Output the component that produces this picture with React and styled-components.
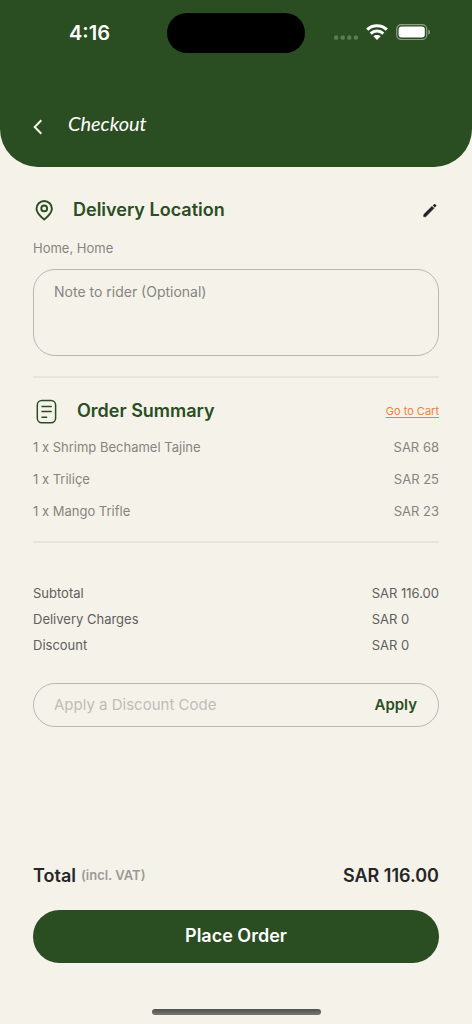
import React from "react";
import styled, { createGlobalStyle } from "styled-components";

const green = "#2a4d21";
const cream = "#f5f2ea";

const GlobalStyle = createGlobalStyle`
  *, *::before, *::after { box-sizing: border-box; }
  body { margin: 0; background: ${cream}; font-family: Inter, sans-serif; color: #262626; }
  button, input, textarea { font-family: inherit; }
  h1, h2, p, ul, dl, dt, dd { margin: 0; padding: 0; }
`;

const Screen = styled.div`
  min-height: 100vh;
  display: flex;
  flex-direction: column;
`;

const Header = styled.header`
  background: ${green};
  color: #fff;
  border-radius: 0 0 38px 38px;
  padding: 13px 0 23px;
`;

const StatusBar = styled.div`
  display: grid;
  grid-template-columns: 1fr 138px 1fr;
  align-items: center;
`;

const Time = styled.time`
  padding-left: 69px;
  font-size: 20px;
  line-height: 24px;
  font-weight: 600;
`;

const Island = styled.div`
  height: 40px;
  border-radius: 20px;
  background: #000;
`;

const Indicators = styled.div`
  display: flex;
  align-items: center;
  justify-content: flex-end;
  gap: 8px;
  padding: 0 41px 2px 0;
`;

const TitleRow = styled.div`
  display: flex;
  align-items: center;
  gap: 20px;
  padding-left: 28px;
  margin-top: 53px;
`;

const BackButton = styled.button`
  display: flex;
  padding: 2px 0 0;
  border: 0;
  background: none;
  color: ${cream};
`;

const Title = styled.h1`
  padding-bottom: 4px;
  font-family: Lato, sans-serif;
  font-size: 20px;
  line-height: 34px;
  font-weight: 400;
  font-style: italic;
`;

const Main = styled.main`
  flex: 1;
  display: flex;
  flex-direction: column;
  padding: 28px 33px 0;
`;

const HeadingRow = styled.div`
  display: flex;
  align-items: center;
  height: 30px;
  gap: 18px;
`;

const Heading = styled.h2`
  flex: 1;
  font-size: 18px;
  line-height: 24px;
  font-weight: 600;
  color: ${green};
`;

const IconButton = styled.button`
  display: flex;
  padding: 0;
  border: 0;
  background: none;
  color: #222;
`;

const Address = styled.p`
  margin-top: 13px;
  font-size: 13px;
  line-height: 20px;
  color: #858580;
`;

const Note = styled.textarea`
  display: block;
  width: 100%;
  height: 87px;
  margin-top: 11px;
  padding: 12px 20px;
  border: 1px solid #b9b8b3;
  border-radius: 22px;
  background: none;
  resize: none;
  font-size: 14px;
  line-height: 20px;
  &::placeholder { color: #858580; opacity: 1; }
`;

const Divider = styled.hr`
  width: 100%;
  height: 2px;
  margin: ${(p) => p.$top}px 0 0;
  border: 0;
  background: #e8e5de;
`;

const OrderSection = styled.section`
  margin-top: 18px;
`;

const CartLink = styled.a`
  font-size: 11px;
  line-height: 16px;
  color: #f0803f;
  text-underline-offset: 2px;
`;

const Items = styled.ul`
  margin-top: 5px;
  list-style: none;
`;

const Item = styled.li`
  display: flex;
  justify-content: space-between;
  font-size: 13px;
  line-height: 32px;
  color: #858580;
`;

const Charges = styled.dl`
  display: grid;
  grid-template-columns: 1fr auto;
  margin-top: 37px;
  font-size: 13px;
  line-height: 26px;
  color: #5f5f5c;
`;

const DiscountForm = styled.form`
  display: flex;
  align-items: center;
  height: 44px;
  margin-top: 25px;
  padding: 0 21px 0 20px;
  border: 1px solid #b9b8b3;
  border-radius: 22px;
`;

const DiscountInput = styled.input`
  flex: 1;
  min-width: 0;
  padding: 0;
  border: 0;
  background: none;
  font-size: 15px;
  line-height: 24px;
  &::placeholder { color: #bfbdb7; opacity: 1; }
`;

const ApplyButton = styled.button`
  padding: 0;
  border: 0;
  background: none;
  font-size: 15px;
  line-height: 24px;
  font-weight: 600;
  color: ${green};
`;

const Footer = styled.footer`
  margin-top: auto;
  padding: 24px 33px 9px;
`;

const TotalRow = styled.div`
  display: flex;
  align-items: center;
  gap: 5px;
  height: 30px;
  font-size: 18px;
  font-weight: 600;
`;

const Vat = styled.span`
  flex: 1;
  font-size: 13px;
  font-weight: 600;
  color: #9b9a96;
`;

const PlaceOrder = styled.button`
  display: block;
  width: 100%;
  height: 53px;
  margin-top: 20px;
  padding: 0 0 2px;
  border: 0;
  border-radius: 27px;
  background: ${green};
  color: #fff;
  font-size: 18px;
  font-weight: 600;
`;

const HomeIndicator = styled.div`
  width: 169px;
  height: 6px;
  margin: 46px auto 0;
  border-radius: 3px;
  background: linear-gradient(#50514d, #777772);
`;

const items = [
  ["1 x Shrimp Bechamel Tajine", "SAR 68"],
  ["1 x Triliçe", "SAR 25"],
  ["1 x Mango Trifle", "SAR 23"],
];

const charges = [
  ["Subtotal", "SAR 116.00"],
  ["Delivery Charges", "SAR 0"],
  ["Discount", "SAR 0"],
];

const SignalDots = () => (
  <svg width="24" height="16" viewBox="0 0 24 16" fill="#fff" fillOpacity="0.25" aria-hidden="true">
    {[0, 6.6, 13.2, 19.8].map((x) => (
      <rect key={x} x={x} y="11.5" width="4.2" height="4.2" rx="1.4" />
    ))}
  </svg>
);

const WifiIcon = () => (
  <svg width="22" height="16" viewBox="0 0 22 16" fill="none" stroke="#fff" aria-hidden="true">
    <path d="M1.2 5.6C6.5.4 15.5.4 20.8 5.6" strokeWidth="3.1" />
    <path d="M4.7 9.6c3.5-3.4 9.1-3.4 12.6 0" strokeWidth="2.9" />
    <path d="M11 16l-3.7-3.7c2-1.8 5.4-1.8 7.4 0Z" fill="#fff" stroke="none" />
  </svg>
);

const BatteryIcon = () => (
  <svg width="35" height="16" viewBox="0 0 35 16" aria-hidden="true">
    <rect x="0.7" y="0.7" width="30" height="14.8" rx="4.5" fill="none" stroke="#fff" strokeOpacity="0.45" strokeWidth="1.2" />
    <rect x="2.6" y="2.6" width="26.2" height="11" rx="3" fill="#fff" />
    <path d="M32.3 5.5v5.2c2.2-.8 2.2-4.4 0-5.2Z" fill="#fff" fillOpacity="0.5" />
  </svg>
);

const BackIcon = () => (
  <svg width="20" height="20" viewBox="0 0 20 20" fill="none" stroke="currentColor" strokeWidth="2" aria-hidden="true">
    <path d="M13.3 4.3 6.7 11l6.6 6.7" />
  </svg>
);

const PinIcon = () => (
  <svg width="22" height="22" viewBox="0 0 22 22" fill="none" stroke={green} strokeWidth="1.9" strokeLinejoin="round" aria-hidden="true">
    <path d="M11.2 20.5C7.7 17.7 3.5 14 3.500 9.700a7.700 7.700 0 0 1 15.400 0c0 4.300-4.200 8-7.700 10.800Z" />
    <circle cx="11.2" cy="9.4" r="2.9" />
  </svg>
);

const PencilIcon = () => (
  <svg width="18" height="18" viewBox="0 0 18 18" aria-hidden="true">
    <path d="M2.7 15.800v-2.200l8.300-8.300 2 2-8.300 8.500Z" fill="currentColor" stroke="currentColor" strokeWidth=".5" strokeLinejoin="round" />
    <path d="M11.800 4.500 13.100 3.200q.6-.6 1.200 0l.8.8q.6.6 0 1.200l-1.300 1.300Z" fill="currentColor" />
  </svg>
);

const NotesIcon = () => (
  <svg width="26" height="26" viewBox="0 0 26 26" fill="none" stroke={green} strokeWidth="1.5" strokeLinecap="round" aria-hidden="true">
    <rect x="4.3" y="2.5" width="18.3" height="22.2" rx="4.5" />
    <path d="M9 8.5h9.2M9 13.6h9.2M9 19.3h4.6" />
  </svg>
);

export default function App() {
  return (
    <Screen>
      <GlobalStyle />
      <Header>
        <StatusBar>
          <Time>4:16</Time>
          <Island />
          <Indicators>
            <SignalDots />
            <WifiIcon />
            <BatteryIcon />
          </Indicators>
        </StatusBar>
        <TitleRow>
          <BackButton type="button" aria-label="Back"><BackIcon /></BackButton>
          <Title>Checkout</Title>
        </TitleRow>
      </Header>
      <Main>
        <section>
          <HeadingRow>
            <PinIcon />
            <Heading>Delivery Location</Heading>
            <IconButton type="button" aria-label="Edit delivery location"><PencilIcon /></IconButton>
          </HeadingRow>
          <Address>Home, Home</Address>
          <Note aria-label="Note to rider" placeholder="Note to rider (Optional)" />
        </section>
        <Divider $top={20} />
        <OrderSection>
          <HeadingRow>
            <NotesIcon />
            <Heading>Order Summary</Heading>
            <CartLink href="#cart">Go to Cart</CartLink>
          </HeadingRow>
          <Items>
            {items.map(([name, price]) => (
              <Item key={name}><span>{name}</span><span>{price}</span></Item>
            ))}
          </Items>
        </OrderSection>
        <Divider $top={14} />
        <Charges>
          {charges.map(([label, value]) => (
            <React.Fragment key={label}><dt>{label}</dt><dd>{value}</dd></React.Fragment>
          ))}
        </Charges>
        <DiscountForm onSubmit={(e) => e.preventDefault()}>
          <DiscountInput type="text" aria-label="Discount code" placeholder="Apply a Discount Code" />
          <ApplyButton type="submit">Apply</ApplyButton>
        </DiscountForm>
      </Main>
      <Footer>
        <TotalRow>
          <span>Total</span>
          <Vat>(incl. VAT)</Vat>
          <span>SAR 116.00</span>
        </TotalRow>
        <PlaceOrder type="button">Place Order</PlaceOrder>
        <HomeIndicator />
      </Footer>
    </Screen>
  );
}
